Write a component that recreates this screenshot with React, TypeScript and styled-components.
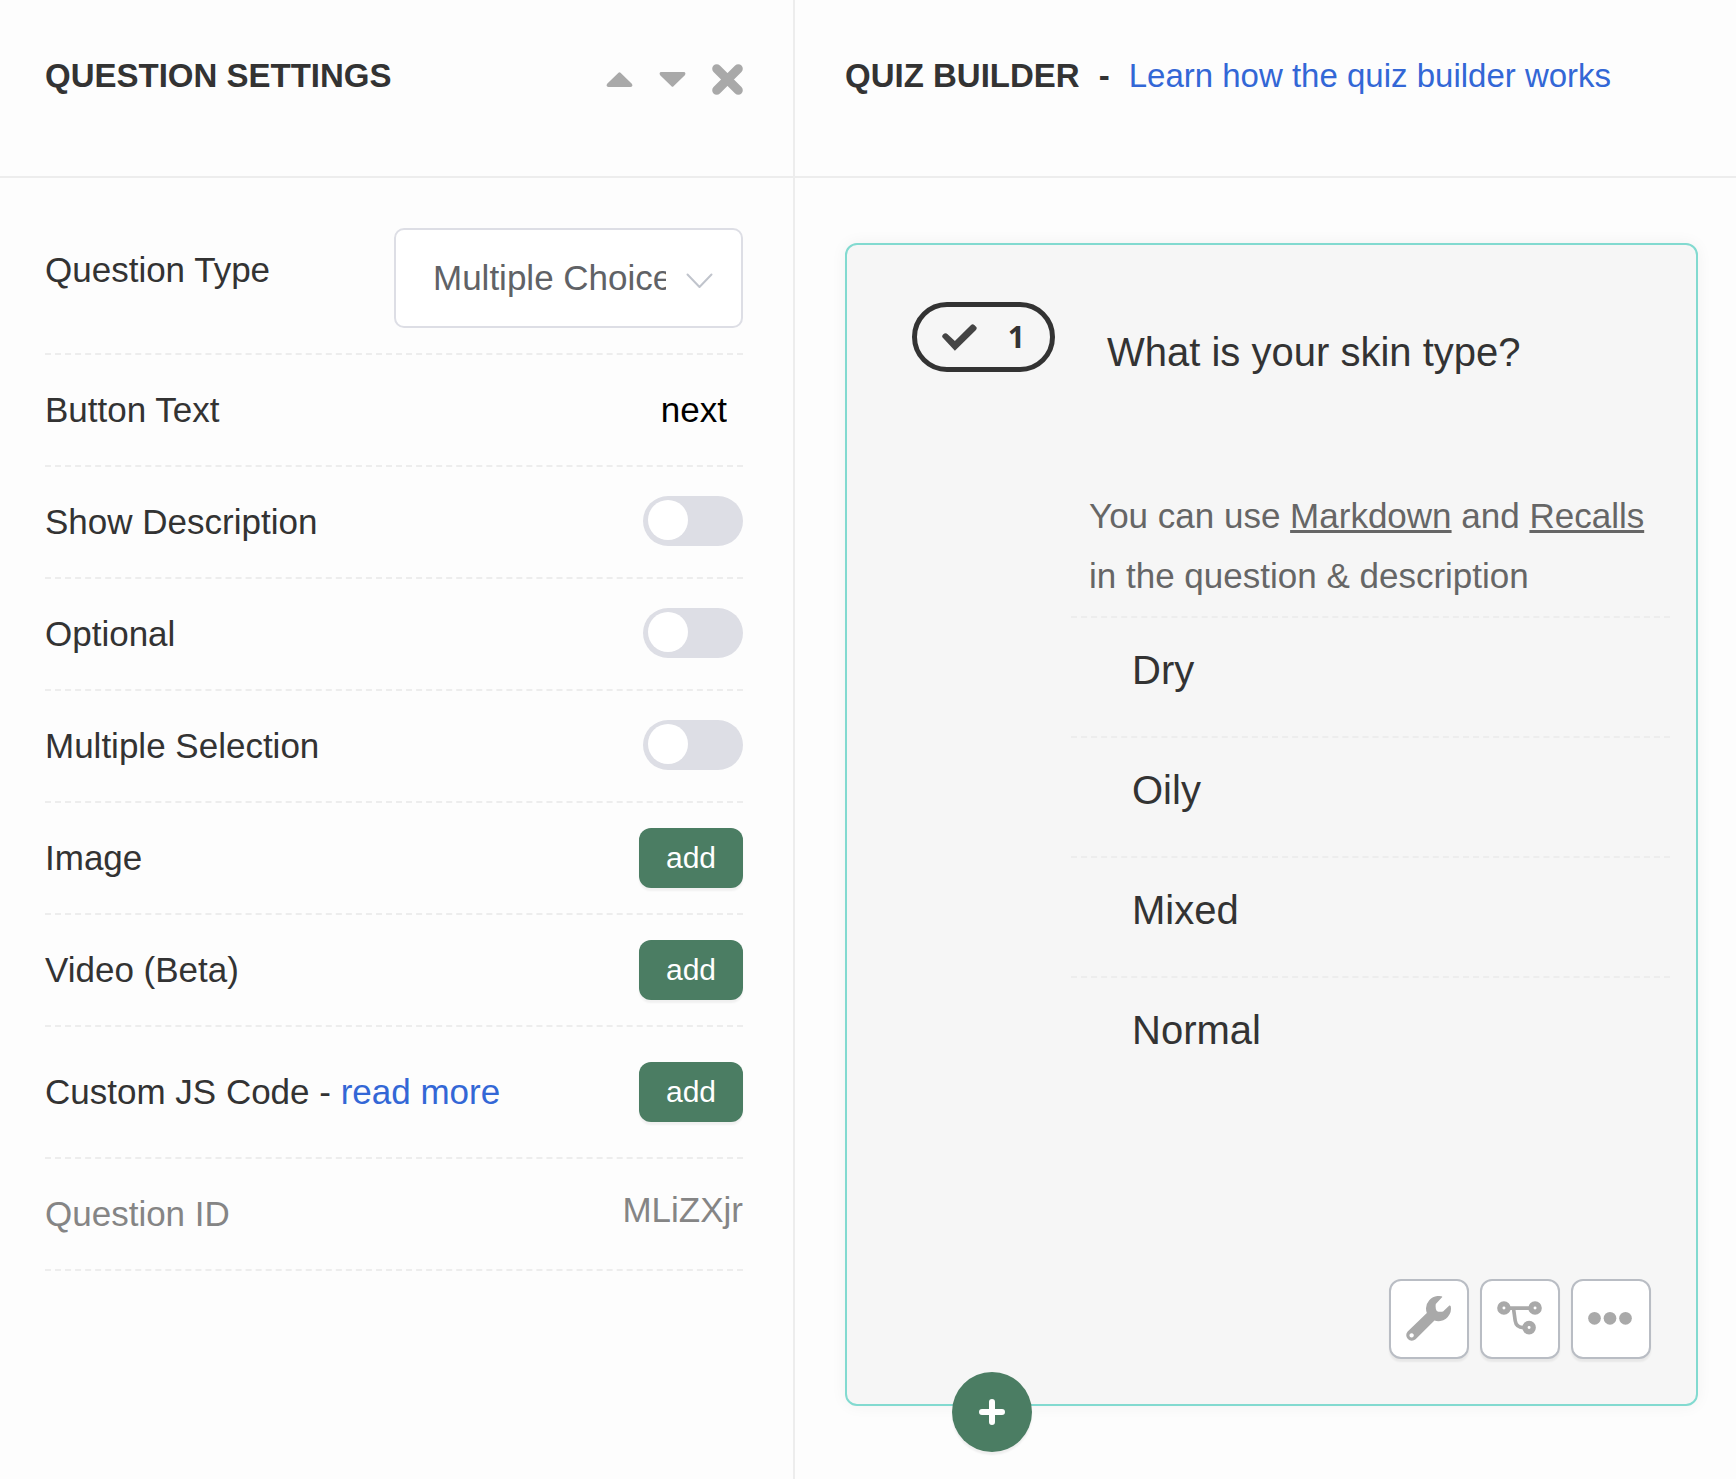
import React, { useState } from "react";
import styled, { createGlobalStyle } from "styled-components";

const GlobalStyle = createGlobalStyle`
  *, *::before, *::after { box-sizing: border-box; }
  body {
    margin: 0;
    background: #fdfdfd;
    color: #333;
    font-family: "Liberation Sans", Arial, sans-serif;
    font-size: 35px;
    line-height: 40px;
  }
  button, input, select { font: inherit; color: inherit; }
  button { cursor: pointer; border: 0; padding: 0; background: none; }
  h1, h2, p, ul { margin: 0; padding: 0; font-weight: 400; font-size: inherit; }
  ul { list-style: none; }
`;

const Page = styled.div`
  display: grid;
  grid-template-columns: 795fr 941fr;
  min-height: 100vh;
`;

const SettingsPanel = styled.aside`
  border-right: 2px solid #ededed;
  min-width: 0;
`;

const BuilderPanel = styled.main`
  min-width: 0;
`;

const PanelHeader = styled.header`
  display: flex;
  align-items: center;
  gap: 19px;
  padding: 56px 50px 80px;
  border-bottom: 2px solid #ededed;
  font-size: 33px;

  ${SettingsPanel} & {
    justify-content: space-between;
    padding-left: 45px;
  }
`;

const PanelTitle = styled.h1`
  font-weight: 700;
  text-transform: uppercase;
  white-space: nowrap;
`;

const Dash = styled.span`
  font-weight: 700;
`;

const Link = styled.a`
  color: #3367d6;
  text-decoration: none;
`;

const HeaderActions = styled.div`
  display: flex;
  align-items: center;
  gap: 26px;
  padding-top: 6px;
`;

const IconButton = styled.button`
  display: flex;
  align-items: center;
  height: 32px;
  color: #a9a9a9;
`;

const SettingsList = styled.div`
  padding: 26px 50px 0 45px;
`;

const Row = styled.div<{ $height?: number; $muted?: boolean }>`
  display: flex;
  align-items: center;
  justify-content: space-between;
  height: ${(p) => p.$height ?? 112}px;
  border-bottom: 2px dashed #ededed;
  color: ${(p) => (p.$muted ? "#858585" : "inherit")};
`;

const SelectRow = styled(Row)`
  align-items: flex-start;
  padding-top: 24px;

  > label { padding-top: 22px; }
`;

const SelectWrap = styled.div`
  position: relative;
  width: 50%;

  svg {
    position: absolute;
    right: 30px;
    top: 45px;
    pointer-events: none;
  }
`;

const Select = styled.select`
  appearance: none;
  display: block;
  width: 100%;
  height: 100px;
  padding: 0 75px 0 37px;
  border: 2px solid #dddee5;
  border-radius: 10px;
  background: #fff;
  color: #606266;
`;

const TextField = styled.input`
  width: 240px;
  padding: 0 16px;
  border: 0;
  background: transparent;
  color: #000;
  text-align: right;
`;

const Toggle = styled.input`
  appearance: none;
  width: 100px;
  height: 50px;
  margin: 0 0 2px;
  padding: 4px 5px;
  border-radius: 25px;
  background: ${(p) => (p.checked ? "#4b7d63" : "#dddee5")};
  cursor: pointer;

  &::before {
    content: "";
    display: block;
    width: 40px;
    height: 40px;
    margin-left: ${(p) => (p.checked ? "50px" : "0")};
    border-radius: 50%;
    background: #fff;
  }
`;

const AddButton = styled.button`
  width: 104px;
  height: 60px;
  border-radius: 12px;
  background: #4b7d63;
  color: #fff;
  font-size: 30px;
  box-shadow: 0 3px 2px rgba(0, 0, 0, 0.05);
`;

const IdValue = styled.span`
  padding-bottom: 8px;
`;

const Canvas = styled.div`
  padding: 65px 38px 73px 50px;
`;

const Card = styled.section`
  position: relative;
  display: flex;
  flex-direction: column;
  padding: 57px 26px 45px 65px;
  border: 2px solid #82dad0;
  border-radius: 12px;
  background: #f6f6f6;
  box-shadow: 0 0 16px rgba(0, 0, 0, 0.05);
`;

const CardBody = styled.div`
  display: grid;
  grid-template-columns: 143px 1fr;
  align-items: start;
  gap: 16px;
`;

const NumberBadge = styled.div`
  display: flex;
  align-items: center;
  justify-content: space-between;
  height: 70px;
  padding: 0 25px;
  border: 5px solid #333;
  border-radius: 35px;
  font: 700 30px/40px "Open Sans", "Liberation Sans", sans-serif;
`;

const QuestionTitle = styled.h2`
  padding: 27px 0 111px 36px;
  font-size: 40px;
  line-height: 46px;
`;

const Hint = styled.p`
  padding: 0 0 10px 18px;
  color: #666;
  line-height: 60px;

  a {
    color: inherit;
    text-decoration-thickness: 3px;
  }
`;

const Option = styled.li`
  height: 120px;
  padding: 29px 0 0 61px;
  border-top: 2px dashed #ededed;
  font-size: 40px;
  line-height: 46px;
`;

const CardTools = styled.div`
  display: flex;
  justify-content: flex-end;
  gap: 11px;
  margin-top: 183px;
  padding-right: 19px;
`;

const ToolButton = styled.button`
  display: flex;
  align-items: center;
  justify-content: center;
  width: 80px;
  height: 80px;
  padding: 0 2px 2px 0;
  border: 2px solid #b9bdc4;
  border-radius: 12px;
  background: #fff;
  color: #a9a9a9;
  box-shadow: 0 3px 2px rgba(0, 0, 0, 0.06);
`;

const AddQuestion = styled.button`
  position: absolute;
  left: 105px;
  bottom: -48px;
  display: flex;
  align-items: center;
  justify-content: center;
  width: 80px;
  height: 80px;
  border-radius: 50%;
  background: #4b7d63;
  color: #fff;
  box-shadow: 0 3px 2px rgba(0, 0, 0, 0.06);
`;

const Caret = ({ down }: { down?: boolean }) => (
  <svg width="27" height="15" viewBox="0 0 78 45" fill="currentColor" aria-hidden="true">
    <path
      transform={down ? "rotate(180 39 22.5)" : undefined}
      d="M36 2Q39 -1 42 2L76 35Q81 45 72 45L6 45Q-3 45 2 35Z"
    />
  </svg>
);

const CloseIcon = () => (
  <svg width="31" height="31" viewBox="0 0 31 31" stroke="currentColor" strokeWidth="9" strokeLinecap="round" aria-hidden="true">
    <path d="M4.700 4.700L26.300 26.300M26.300 4.700L4.700 26.300" />
  </svg>
);

const ChevronIcon = () => (
  <svg width="27" height="16" viewBox="0 0 27 16" fill="none" stroke="#c0c4cc" strokeWidth="2" strokeLinecap="round" strokeLinejoin="round" aria-hidden="true">
    <path d="M1.500 1.500L13.500 14L25.500 1.500" />
  </svg>
);

const CheckIcon = () => (
  <svg width="35" height="27" viewBox="126 102 106 82" fill="#444" aria-hidden="true">
    <path d="M127 142Q125 138 129 134L133 131Q138 128 142 132L165 154L214 105Q219 101 224 105L230 111Q233 115 229 120L165 183Z" />
  </svg>
);

const WrenchIcon = () => (
  <svg width="45" height="45" viewBox="107 107 136 136" fill="currentColor" aria-hidden="true">
    <path
      fillRule="evenodd"
      d="M216 111L197 131Q195 146 200 152Q206 156 219 154L238 136Q243 133 243 144A38 38 0 0 1 193 181L136 238A17 17 0 0 1 112 214L170 158A38 38 0 0 1 214 108Q218 109 216 111ZM124 219.500a6.500 6.500 0 1 0 .01 0Z"
    />
  </svg>
);

const BranchIcon = () => (
  <svg width="45" height="34" viewBox="382 125 136 102" fill="none" stroke="currentColor" aria-hidden="true">
    <path strokeWidth="11" d="M420 146H480M432 148L437 184Q440 204 462 205" />
    <g strokeWidth="16" fill="#fff">
      <circle cx="403" cy="146" r="12.5" />
      <circle cx="497" cy="146" r="12.5" />
      <circle cx="479" cy="205" r="12.5" />
    </g>
  </svg>
);

const DotsIcon = () => (
  <svg width="44" height="13" viewBox="659 156 131 39" fill="currentColor" aria-hidden="true">
    <circle cx="678" cy="175" r="19" />
    <circle cx="724.5" cy="175" r="19" />
    <circle cx="771" cy="175" r="19" />
  </svg>
);

const PlusIcon = () => (
  <svg width="26" height="26" viewBox="0 0 26 26" stroke="currentColor" strokeWidth="6" strokeLinecap="round" aria-hidden="true">
    <path d="M13 3V23M3 13H23" />
  </svg>
);

const toggles = ["Show Description", "Optional", "Multiple Selection"];
const media = ["Image", "Video (Beta)"];
const options = ["Dry", "Oily", "Mixed", "Normal"];

const ToggleRow = ({ label }: { label: string }) => {
  const [on, setOn] = useState(false);
  const id = label.toLowerCase().replace(" ", "-");
  return (
    <Row>
      <label htmlFor={id}>{label}</label>
      <Toggle id={id} type="checkbox" role="switch" checked={on} onChange={() => setOn(!on)} />
    </Row>
  );
};

export default function App() {
  return (
    <>
      <GlobalStyle />
      <Page>
        <SettingsPanel>
          <PanelHeader>
            <PanelTitle>Question Settings</PanelTitle>
            <HeaderActions>
              <IconButton aria-label="Previous question"><Caret /></IconButton>
              <IconButton aria-label="Next question"><Caret down /></IconButton>
              <IconButton aria-label="Close"><CloseIcon /></IconButton>
            </HeaderActions>
          </PanelHeader>
          <SettingsList>
            <SelectRow $height={151}>
              <label htmlFor="question-type">Question Type</label>
              <SelectWrap>
                <Select id="question-type">
                  <option>Multiple Choice</option>
                </Select>
                <ChevronIcon />
              </SelectWrap>
            </SelectRow>
            <Row>
              <label htmlFor="button-text">Button Text</label>
              <TextField id="button-text" defaultValue="next" />
            </Row>
            {toggles.map((label) => <ToggleRow key={label} label={label} />)}
            {media.map((label) => (
              <Row key={label}>
                <span>{label}</span>
                <AddButton>add</AddButton>
              </Row>
            ))}
            <Row $height={132}>
              <span>Custom JS Code - <Link href="#">read more</Link></span>
              <AddButton>add</AddButton>
            </Row>
            <Row $muted>
              <span>Question ID</span>
              <IdValue>MLiZXjr</IdValue>
            </Row>
          </SettingsList>
        </SettingsPanel>

        <BuilderPanel>
          <PanelHeader>
            <PanelTitle>Quiz Builder</PanelTitle>
            <Dash>-</Dash>
            <Link href="#">Learn how the quiz builder works</Link>
          </PanelHeader>
          <Canvas>
            <Card>
              <CardBody>
                <NumberBadge><CheckIcon />1</NumberBadge>
                <div>
                  <QuestionTitle>What is your skin type?</QuestionTitle>
                  <Hint>
                    You can use <a href="#">Markdown</a> and <a href="#">Recalls</a> in the question &amp; description
                  </Hint>
                  <ul>
                    {options.map((option) => <Option key={option}>{option}</Option>)}
                  </ul>
                </div>
              </CardBody>
              <CardTools>
                <ToolButton aria-label="Settings"><WrenchIcon /></ToolButton>
                <ToolButton aria-label="Logic"><BranchIcon /></ToolButton>
                <ToolButton aria-label="More"><DotsIcon /></ToolButton>
              </CardTools>
              <AddQuestion aria-label="Add question"><PlusIcon /></AddQuestion>
            </Card>
          </Canvas>
        </BuilderPanel>
      </Page>
    </>
  );
}
